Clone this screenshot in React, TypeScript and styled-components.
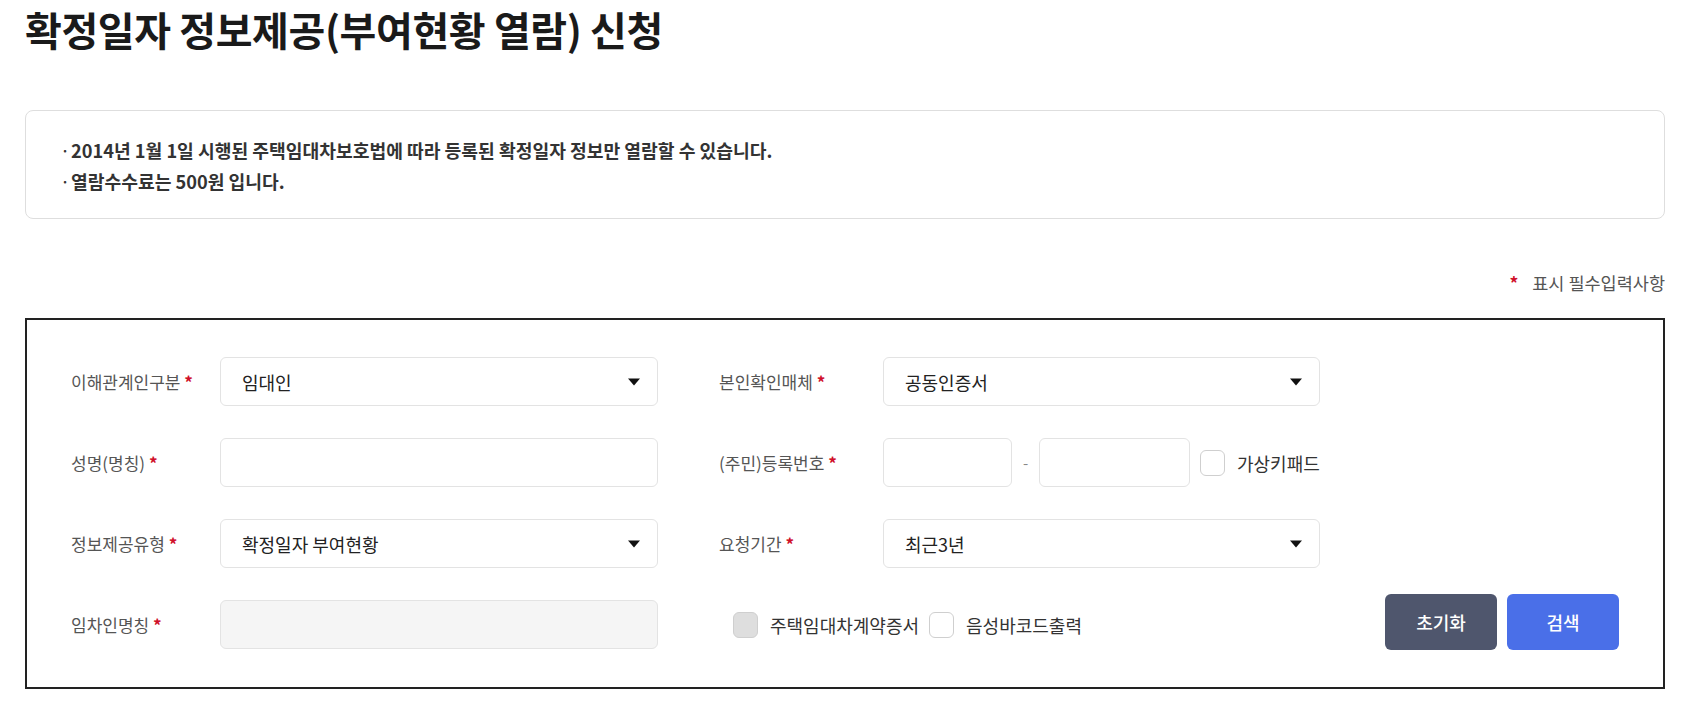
import styled, { createGlobalStyle } from "styled-components";

const GlobalStyle = createGlobalStyle`
  * { box-sizing: border-box; }
  body {
    margin: 0;
    background: #fff;
    font-family: "Noto Sans CJK KR", "Noto Sans", sans-serif;
    color: #222;
  }
`;

export default function App() {
  return (
    <>
      <GlobalStyle />
      <SPage>
        <STitle>확정일자 정보제공(부여현황 열람) 신청</STitle>

        <SInfoBox>
          <SInfoLine>
            <SDot>·</SDot>
            2014년 1월 1일 시행된 주택임대차보호법에 따라 등록된 확정일자 정보만 열람할 수 있습니다.
          </SInfoLine>
          <SInfoLine>
            <SDot>·</SDot>
            열람수수료는 500원 입니다.
          </SInfoLine>
        </SInfoBox>

        <SRequiredNote>
          <SStar>*</SStar>
          <span>표시 필수입력사항</span>
        </SRequiredNote>

        <SFormBox>
          <SRow>
            <SField>
              <SLabel $width={149}>
                이해관계인구분 <SStar>*</SStar>
              </SLabel>
              <SSelect $width={438}>
                <span>임대인</span>
                <Arrow />
              </SSelect>
            </SField>
            <SField>
              <SLabel $width={164}>
                본인확인매체 <SStar>*</SStar>
              </SLabel>
              <SSelect $width={437}>
                <span>공동인증서</span>
                <Arrow />
              </SSelect>
            </SField>
          </SRow>

          <SRow>
            <SField>
              <SLabel $width={149}>
                성명(명칭) <SStar>*</SStar>
              </SLabel>
              <SInput $width={438} />
            </SField>
            <SField>
              <SLabel $width={164}>
                (주민)등록번호 <SStar>*</SStar>
              </SLabel>
              <SIdGroup>
                <SInput $width={129} />
                <SDash>-</SDash>
                <SInput $width={151} />
                <SCheckLabel>
                  <SCheckbox />
                  가상키패드
                </SCheckLabel>
              </SIdGroup>
            </SField>
          </SRow>

          <SRow>
            <SField>
              <SLabel $width={149}>
                정보제공유형 <SStar>*</SStar>
              </SLabel>
              <SSelect $width={438}>
                <span>확정일자 부여현황</span>
                <Arrow />
              </SSelect>
            </SField>
            <SField>
              <SLabel $width={164}>
                요청기간 <SStar>*</SStar>
              </SLabel>
              <SSelect $width={437}>
                <span>최근3년</span>
                <Arrow />
              </SSelect>
            </SField>
          </SRow>

          <SRow>
            <SField>
              <SLabel $width={149}>
                임차인명칭 <SStar>*</SStar>
              </SLabel>
              <SInput $width={438} $disabled disabled />
            </SField>
            <SOptions>
              <SCheckLabel>
                <SCheckbox $checkedGray />
                주택임대차계약증서
              </SCheckLabel>
              <SCheckLabel>
                <SCheckbox />
                음성바코드출력
              </SCheckLabel>
            </SOptions>
            <SButtons>
              <SButton $variant="dark">초기화</SButton>
              <SButton $variant="blue">검색</SButton>
            </SButtons>
          </SRow>
        </SFormBox>
      </SPage>
    </>
  );
}

function Arrow() {
  return (
    <svg width="12" height="8" viewBox="0 0 12 8">
      <path d="M0 0.5 L12 0.5 L6 7.5 Z" fill="#111" />
    </svg>
  );
}

const SPage = styled.div`
  padding: 0 17px 40px 25px;
`;

const STitle = styled.h1`
  margin: 0;
  font-size: 40px;
  line-height: 58px;
  font-weight: 700;
  letter-spacing: -0.4px;
  color: #1a1a1a;
`;

const SInfoBox = styled.div`
  margin-top: 52px;
  border: 1px solid #dedede;
  border-radius: 8px;
  padding: 24px 0 21px 34px;
`;

const SInfoLine = styled.div`
  display: flex;
  align-items: center;
  font-size: 18.2px;
  line-height: 31px;
  font-weight: 700;
  color: #333;
`;

const SDot = styled.span`
  width: 11px;
  font-weight: 400;
`;

const SRequiredNote = styled.div`
  margin-top: 53px;
  display: flex;
  justify-content: flex-end;
  align-items: center;
  gap: 14px;
  font-size: 17.5px;
  line-height: 22px;
  color: #555;
`;

const SStar = styled.span`
  color: #d0102a;
  font-weight: 700;
`;

const SFormBox = styled.div`
  margin-top: 24px;
  border: 2px solid #222;
  padding: 37px 44px 38px 44px;
  display: flex;
  flex-direction: column;
  gap: 32px;
`;

const SRow = styled.div`
  display: flex;
  align-items: center;
  height: 49px;
`;

const SField = styled.div`
  display: flex;
  align-items: center;

  & + & {
    margin-left: 61px;
  }
`;

const SLabel = styled.div<{ $width: number }>`
  width: ${(p) => p.$width}px;
  flex-shrink: 0;
  font-size: 17px;
  color: #555;
`;

const SSelect = styled.div<{ $width: number }>`
  width: ${(p) => p.$width}px;
  height: 49px;
  border: 1px solid #e3e3e3;
  border-radius: 6px;
  background: #fff;
  display: flex;
  align-items: center;
  justify-content: space-between;
  padding: 0 17px 0 21px;
  font-size: 18px;
  color: #222;
`;

const SInput = styled.input<{ $width: number; $disabled?: boolean }>`
  width: ${(p) => p.$width}px;
  height: 49px;
  border: 1px solid #e3e3e3;
  border-radius: 6px;
  background: ${(p) => (p.$disabled ? "#f5f5f5" : "#fff")};
  padding: 0 16px;
  font-size: 18px;
  font-family: inherit;
  outline: none;
`;

const SIdGroup = styled.div`
  display: flex;
  align-items: center;
`;

const SDash = styled.span`
  width: 27px;
  text-align: center;
  color: #888;
  font-size: 15px;
`;

const SCheckLabel = styled.label`
  display: flex;
  align-items: center;
  gap: 12px;
  font-size: 18px;
  color: #333;
  margin-left: 10px;
  white-space: nowrap;
`;

const SCheckbox = styled.span<{ $checkedGray?: boolean }>`
  width: 25px;
  height: 26px;
  border: 1px solid #cfcfcf;
  border-radius: 6px;
  background: ${(p) => (p.$checkedGray ? "#dedede" : "#fff")};
  flex-shrink: 0;
`;

const SOptions = styled.div`
  display: flex;
  align-items: center;
  margin-left: 75px;

  & > label:first-child {
    margin-left: 0;
  }
`;

const SButtons = styled.div`
  margin-left: auto;
  display: flex;
  gap: 10px;
  margin-top: -5px;
`;

const SButton = styled.button<{ $variant: "dark" | "blue" }>`
  width: 112px;
  height: 56px;
  border: none;
  border-radius: 6px;
  background: ${(p) => (p.$variant === "dark" ? "#4f566d" : "#4a6fe8")};
  color: #fff;
  font-family: inherit;
  font-size: 18px;
  font-weight: 500;
  cursor: pointer;
`;
